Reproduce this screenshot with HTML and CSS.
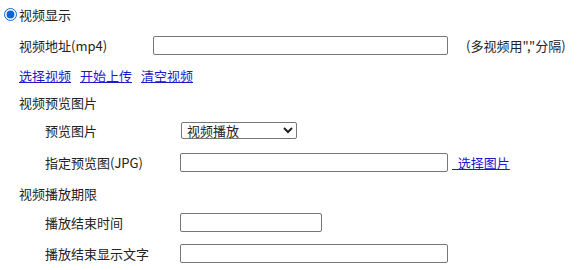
FILE: index.html
```html
<!DOCTYPE html>
<html>
<head>
  <meta charset="utf-8">
  <title>视频设置</title>
  <link rel="stylesheet" href="styles.css">
</head>
<body>
  <div class="panel">
    <div class="row r1">
      <label class="radio-label"><input type="radio" name="mode" class="radio" checked>视频显示</label>
    </div>
    <div class="row r2">
      <span class="label">视频地址(mp4)</span>
      <input type="text" class="field field-long">
      <span class="hint">(多视频用","分隔)</span>
    </div>
    <div class="row r3">
      <a href="#" class="link">选择视频</a>
      <a href="#" class="link">开始上传</a>
      <a href="#" class="link">清空视频</a>
    </div>
    <div class="row r4">
      <span class="section">视频预览图片</span>
    </div>
    <div class="row r5 sub">
      <span class="sub-label">预览图片</span>
      <select class="picker">
        <option>视频播放</option>
        <option>指定图片</option>
      </select>
    </div>
    <div class="row r6 sub">
      <span class="sub-label">指定预览图(JPG)</span>
      <input type="text" class="field field-mid">
      <a href="#" class="link pick">&nbsp;&nbsp;选择图片</a>
    </div>
    <div class="row r7">
      <span class="section">视频播放期限</span>
    </div>
    <div class="row r8 sub">
      <span class="sub-label">播放结束时间</span>
      <input type="text" class="field field-short">
    </div>
    <div class="row r9 sub">
      <span class="sub-label">播放结束显示文字</span>
      <input type="text" class="field field-mid">
    </div>
  </div>
</body>
</html>
```

FILE: styles.css
```css
body {
  margin: 0;
  background: #fff;
  font-family: "Noto Sans CJK SC", "Liberation Sans", sans-serif;
  font-size: 13px;
  color: #222;
}

.panel {
  width: 577px;
}

.row {
  display: flex;
  align-items: center;
  padding-left: 19px;
}

.r1 { height: 28px; padding-left: 4px; }
.r2 { height: 34px; }
.r3 { height: 26px; }
.r4 { height: 28px; }
.r5 { height: 28px; }
.r6 { height: 36px; }
.r7 { height: 26px; }
.r8 { height: 32px; }
.r9 { height: 31px; }

.radio-label {
  display: flex;
  align-items: center;
}

.radio {
  width: 13px;
  height: 13px;
  margin: 0 2px 0 0;
  accent-color: #0a66d8;
}

.label {
  width: 134px;
}

.sub {
  padding-left: 45px;
}

.sub-label {
  width: 135px;
}

.field {
  box-sizing: border-box;
  height: 19px;
  margin: 0;
  border: 1px solid #767676;
  border-radius: 2px;
  padding: 1px 2px;
  font: inherit;
}

.field-long { width: 295px; }
.field-mid { width: 268px; }
.field-short { width: 142px; }

.hint {
  margin-left: 18px;
}

.link {
  color: #1a1acc;
  text-decoration: underline;
  margin-right: 9px;
}

.pick {
  margin-left: 4px;
}

.picker {
  box-sizing: border-box;
  width: 116px;
  height: 17px;
  margin: 0 0 0 1px;
  padding: 0 0 0 1px;
  border: 1px solid #767676;
  border-radius: 2px;
  font-family: "Liberation Sans", "Noto Sans CJK SC", sans-serif;
  font-size: 13px;
  line-height: 13px;
  color: #222;
  background: #fff;
}
```
